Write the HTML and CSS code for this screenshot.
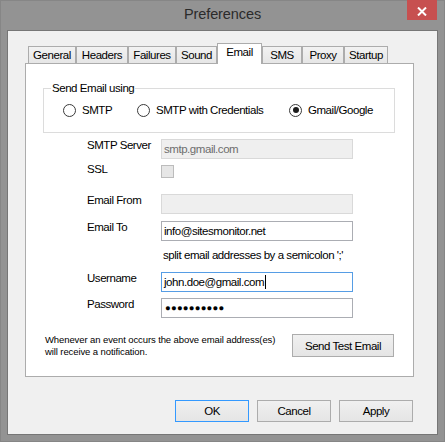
FILE: index.html
```html
<!DOCTYPE html>
<html>
<head>
<meta charset="utf-8">
<title>Preferences</title>
<link rel="stylesheet" href="styles.css">
</head>
<body>
<div class="window">
  <div class="titlebar">
    <div class="title">Preferences</div>
    <div class="close">
      <svg width="10" height="9" viewBox="0 0 10 9"><path d="M1 0.5 L9 8.5 M9 0.5 L1 8.5" stroke="#fff" stroke-width="2" fill="none"/></svg>
    </div>
  </div>
  <div class="client">
    <div class="tabs">
      <div class="tab t-general">General</div>
      <div class="tab t-headers">Headers</div>
      <div class="tab t-failures">Failures</div>
      <div class="tab t-sound">Sound</div>
      <div class="tab t-email active">Email</div>
      <div class="tab t-sms">SMS</div>
      <div class="tab t-proxy">Proxy</div>
      <div class="tab t-startup">Startup</div>
    </div>
    <div class="panel">
      <fieldset class="group">
        <legend>Send Email using</legend>
        <div class="radios">
          <div class="radio"><span class="circle"></span><span>SMTP</span></div>
          <div class="radio"><span class="circle"></span><span>SMTP with Credentials</span></div>
          <div class="radio"><span class="circle on"></span><span>Gmail/Google</span></div>
        </div>
      </fieldset>
      <div class="form">
        <div class="row">
          <span class="lbl">SMTP Server</span>
          <div class="field disabled">smtp.gmail.com</div>
        </div>
        <div class="row gap6">
          <span class="lbl up">SSL</span>
          <span class="check"></span>
        </div>
        <div class="row gap16">
          <span class="lbl">Email From</span>
          <div class="field disabled"></div>
        </div>
        <div class="row gap7">
          <span class="lbl">Email To</span>
          <div class="field">info@sitesmonitor.net</div>
        </div>
        <div class="hint">split email addresses by a semicolon ';'</div>
        <div class="row gap10">
          <span class="lbl">Username</span>
          <div class="field focus">john.doe@gmail.com<span class="caret"></span></div>
        </div>
        <div class="row gap6">
          <span class="lbl">Password</span>
          <div class="field"><span class="dots">●●●●●●●●●●</span></div>
        </div>
      </div>
      <div class="note-row">
        <div class="note">Whenever an event occurs the above email address(es)<br>will receive a notification.</div>
        <div class="btn test">Send Test Email</div>
      </div>
    </div>
    <div class="actions">
      <div class="btn default">OK</div>
      <div class="btn">Cancel</div>
      <div class="btn">Apply</div>
    </div>
  </div>
</div>
</body>
</html>
```
FILE: styles.css
```css
* { box-sizing: border-box; }
html, body { margin: 0; padding: 0; }
body {
  width: 445px;
  height: 442px;
  overflow: hidden;
  background: #939393;
  font-family: "Liberation Sans", Arial, sans-serif;
  font-size: 11.5px;
  letter-spacing: -0.45px;
  color: #000;
}
.window {
  height: 442px;
  display: flex;
  flex-direction: column;
  box-shadow: inset 0 0 0 1px #868686;
}
.titlebar {
  height: 30px;
  flex: none;
  display: grid;
  grid-template-columns: 1fr auto 1fr;
}
.title {
  grid-column: 2;
  font-size: 14.5px;
  letter-spacing: -0.1px;
  line-height: 29px;
  color: #2b2b2b;
}
.close {
  grid-column: 3;
  justify-self: end;
  align-self: start;
  margin-right: 8px;
  width: 30px;
  height: 20px;
  background: #c75050;
  display: flex;
  align-items: center;
  justify-content: center;
  padding-top: 2px;
}
.close svg { display: block; }
.client {
  margin: 0 7px;
  height: 405px;
  border: 1px solid #767676;
  background: #f0f0f0;
  padding-top: 12px;
}
.tabs {
  display: flex;
  align-items: flex-end;
  margin-left: 20px;
}
.tab {
  height: 17px;
  border: 1px solid #acacac;
  border-bottom: none;
  background: linear-gradient(#f2f2f2, #e6e6e6);
  display: flex;
  align-items: center;
  justify-content: center;
  line-height: 13px;
  padding-top: 1px;
  white-space: nowrap;
}
.tab.active {
  height: 21px;
  margin-bottom: -1px;
  background: #fff;
  position: relative;
  padding-top: 0;
  padding-bottom: 3px;
}
.t-general { width: 48px; }
.t-headers { width: 52px; }
.t-failures { width: 48px; }
.t-sound { width: 41px; }
.t-email { width: 45px; }
.t-sms { width: 40px; }
.t-proxy { width: 42px; }
.t-startup { width: 44px; }
.panel {
  margin-left: 17px;
  width: 389px;
  height: 314px;
  border: 1px solid #acacac;
  background: #fff;
  display: flex;
  flex-direction: column;
}
.group {
  margin: 18px 0 0 17px;
  width: 352px;
  border: 1px solid #dcdcdc;
  padding: 0 0 15px 7px;
  min-width: 0;
}
.group legend {
  padding: 0 1px;
  margin: 0;
  line-height: 13px;
}
.radios {
  display: grid;
  grid-template-columns: 74px 152px auto;
  margin: 8px 0 0 12px;
  height: 14px;
  align-items: center;
}
.radio {
  display: flex;
  align-items: center;
  gap: 6px;
  line-height: 13px;
  white-space: nowrap;
}
.circle {
  flex: none;
  width: 13px;
  height: 13px;
  border: 1px solid #3a3a3a;
  border-radius: 50%;
  background: #fff;
  display: flex;
  align-items: center;
  justify-content: center;
}
.circle.on::after {
  content: "";
  width: 6px;
  height: 6px;
  border-radius: 50%;
  background: #1c1c1c;
}
.form {
  margin: 6px 0 0 61px;
  display: flex;
  flex-direction: column;
}
.row {
  display: flex;
  align-items: flex-start;
}
.gap6 { margin-top: 6px; }
.gap7 { margin-top: 7px; }
.gap10 { margin-top: 10px; }
.gap16 { margin-top: 16px; }
.lbl {
  width: 74px;
  line-height: 13px;
  white-space: nowrap;
}
.lbl.up { margin-top: -2px; }
.field {
  width: 192px;
  height: 20px;
  border: 1px solid #abadb3;
  background: #fff;
  padding: 0 2px;
  line-height: 18px;
  white-space: nowrap;
  display: flex;
  align-items: center;
}
.field.disabled {
  border-color: #d9d9d9;
  background: #efefef;
  color: #6d6d6d;
}
.field.focus { border-color: #569de5; }
.caret {
  display: inline-block;
  width: 1px;
  height: 14px;
  background: #000;
  margin-left: 1px;
}
.dots {
  font-size: 9.5px;
  letter-spacing: 0.2px;
  padding-left: 1px;
}
.check {
  width: 13px;
  height: 13px;
  border: 1px solid #bcbcbc;
  background: #e6e6e6;
}
.hint {
  margin: 8px 0 0 76px;
  line-height: 13px;
  white-space: nowrap;
}
.note-row {
  display: flex;
  justify-content: space-between;
  align-items: flex-start;
  margin: 16px 19px 0 19px;
}
.note {
  font-size: 9.5px;
  letter-spacing: -0.1px;
  line-height: 12px;
  white-space: nowrap;
}
.btn {
  height: 22px;
  width: 74px;
  border: 1px solid #acacac;
  background: linear-gradient(#f0f0f0, #e5e5e5);
  display: flex;
  align-items: center;
  justify-content: center;
  white-space: nowrap;
}
.btn.test {
  width: 102px;
  height: 23px;
}
.btn.default { border-color: #3399ff; }
.actions {
  display: flex;
  justify-content: flex-end;
  gap: 8px;
  margin-top: 23px;
  padding-right: 24px;
}
```
